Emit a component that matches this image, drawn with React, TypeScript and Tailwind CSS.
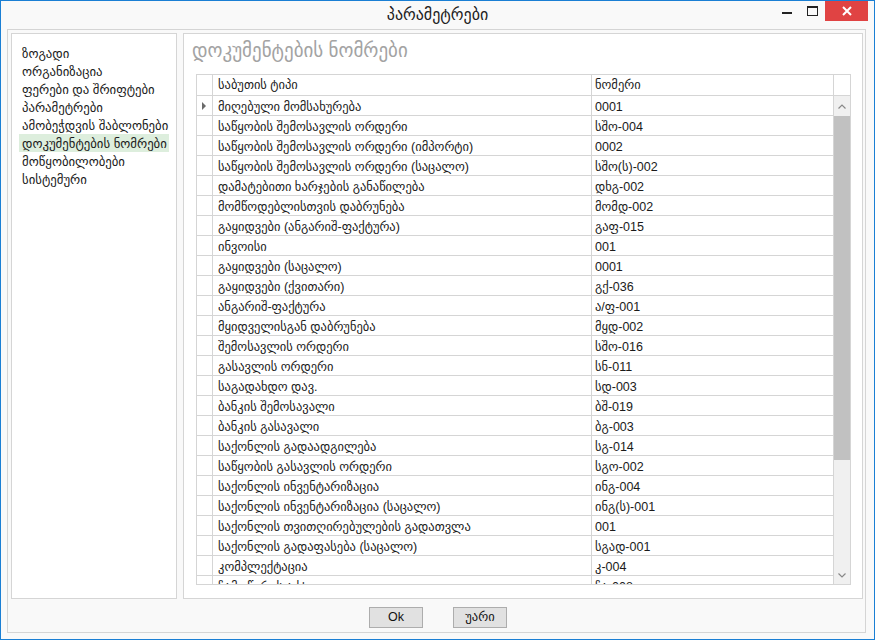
import React from "react";

const navItems = [
  "ზოგადი",
  "ორგანიზაცია",
  "ფერები და შრიფტები",
  "პარამეტრები",
  "ამობეჭდვის შაბლონები",
  "დოკუმენტების ნომრები",
  "მოწყობილობები",
  "სისტემური",
];

const rows: [string, string][] = [
  ["მიღებული მომსახურება", "0001"],
  ["საწყობის შემოსავლის ორდერი", "სშო-004"],
  ["საწყობის შემოსავლის ორდერი (იმპორტი)", "0002"],
  ["საწყობის შემოსავლის ორდერი (საცალო)", "სშო(ს)-002"],
  ["დამატებითი ხარჯების განაწილება", "დხგ-002"],
  ["მომწოდებლისთვის დაბრუნება", "მომდ-002"],
  ["გაყიდვები (ანგარიშ-ფაქტურა)", "გაფ-015"],
  ["ინვოისი", "001"],
  ["გაყიდვები (საცალო)", "0001"],
  ["გაყიდვები (ქვითარი)", "გქ-036"],
  ["ანგარიშ-ფაქტურა", "ა/ფ-001"],
  ["მყიდველისგან დაბრუნება", "მყდ-002"],
  ["შემოსავლის ორდერი", "სშო-016"],
  ["გასავლის ორდერი", "სნ-011"],
  ["საგადახდო დავ.", "სდ-003"],
  ["ბანკის შემოსავალი", "ბშ-019"],
  ["ბანკის გასავალი", "ბგ-003"],
  ["საქონლის გადაადგილება", "სგ-014"],
  ["საწყობის გასავლის ორდერი", "სგო-002"],
  ["საქონლის ინვენტარიზაცია", "ინგ-004"],
  ["საქონლის ინვენტარიზაცია (საცალო)", "ინგ(ს)-001"],
  ["საქონლის თვითღირებულების გადათვლა", "001"],
  ["საქონლის გადაფასება (საცალო)", "სგად-001"],
  ["კომპლექტაცია", "კ-004"],
  ["ჩამოწერის აქტი", "ჩა-008"],
];

const font = { fontFamily: '"Liberation Sans", "DejaVu Sans", sans-serif' };

export default function App() {
  return (
    <div
      className="w-[875px] h-[640px] border border-[#1a7fd4] bg-[#f9f9f9] flex flex-col text-[#1a1a1a] overflow-hidden"
      style={font}
    >
      {/* Title bar */}
      <div className="h-[28px] flex items-start relative">
        <div className="flex-1 text-center text-[16px] leading-[28px] text-[#222]">პარამეტრები</div>
        <div className="absolute right-[6px] top-0 flex items-start">
          <div className="w-[24px] h-[20px] flex items-center justify-center">
            <div className="w-[10px] h-[2px] bg-[#222] mt-[4px]" />
          </div>
          <div className="w-[26px] h-[20px] flex items-center justify-center">
            <div className="w-[11px] h-[10px] border border-[#222] border-t-2" />
          </div>
          <div className="w-[43px] h-[20px] bg-[#e04343] flex items-center justify-center">
            <svg width="10" height="10" viewBox="0 0 10 10">
              <path d="M1 1 L9 9 M9 1 L1 9" stroke="white" strokeWidth="2" />
            </svg>
          </div>
        </div>
      </div>

      {/* Outer box */}
      <div className="ml-[6px] w-[859px] h-[604px] border border-[#d5d5d5] flex flex-col pl-[3px] pt-[3px]">
        <div className="flex h-[566px]">
          {/* Left nav */}
          <div className="w-[166px] h-full border border-[#d5d5d5] bg-white pt-[10px] pl-[7px]">
            {navItems.map((t, i) => (
              <div
                key={t}
                className={
                  "w-[150px] h-[18px] leading-[18px] pt-[1px] px-[3px] text-[12.75px] whitespace-nowrap " +
                  (i === 5 ? "bg-[#ddeedd]" : "")
                }
              >
                {t}
              </div>
            ))}
          </div>

          {/* Right panel */}
          <div className="ml-[6px] w-[680px] h-full border border-[#d5d5d5] bg-white">
            <div className="h-[40px] pl-[8px] pt-[5px] text-[19px] leading-[24px] text-[#a3a3a3] whitespace-nowrap">
              დოკუმენტების ნომრები
            </div>
            <div className="ml-[12px] w-[655px] h-[511px] border border-[#d5d5d5] flex flex-col overflow-hidden text-[12.5px]">
              {/* header */}
              <div className="flex h-[21px] border-b border-[#d5d5d5] shrink-0">
                <div className="w-[16px] border-r border-[#d5d5d5]" />
                <div className="w-[379px] border-r border-[#d5d5d5] pl-[5px] pt-[1px] leading-[19px] whitespace-nowrap">
                  საბუთის ტიპი
                </div>
                <div className="w-[242px] border-r border-[#d5d5d5] pl-[3px] pt-[1px] leading-[19px] whitespace-nowrap">
                  ნომერი
                </div>
                <div className="flex-1" />
              </div>
              <div className="flex flex-1 min-h-0">
                <div className="w-[637px] overflow-hidden">
                  {rows.map(([a, b], i) => (
                    <div key={i} className="flex h-[20px] border-b border-[#d5d5d5]">
                      <div className="w-[16px] border-r border-[#d5d5d5] flex items-center justify-center pt-[1px]">
                        {i === 0 && (
                          <svg width="5" height="8" viewBox="0 0 5 8">
                            <path d="M0 0 L4 4 L0 8 Z" fill="#6b6b6b" />
                          </svg>
                        )}
                      </div>
                      <div className="w-[379px] border-r border-[#d5d5d5] pl-[5px] pt-[3px] leading-[16px] whitespace-nowrap overflow-hidden">
                        {a}
                      </div>
                      <div className="w-[242px] border-r border-[#d5d5d5] pl-[3px] pt-[3px] leading-[16px] whitespace-nowrap overflow-hidden">
                        {b}
                      </div>
                    </div>
                  ))}
                </div>
                {/* scrollbar */}
                <div className="flex-1 bg-[#f0f0f0] flex flex-col">
                  <div className="h-[20px] flex items-center justify-center">
                    <svg width="8" height="5" viewBox="0 0 8 5">
                      <path d="M0.5 4.5 L4 1 L7.5 4.5" stroke="#888" strokeWidth="1.2" fill="none" />
                    </svg>
                  </div>
                  <div className="h-[344px] bg-[#c1c1c1]" />
                  <div className="flex-1" />
                  <div className="h-[18px] flex items-center justify-center">
                    <svg width="8" height="5" viewBox="0 0 8 5">
                      <path d="M0.5 0.5 L4 4 L7.5 0.5" stroke="#888" strokeWidth="1.2" fill="none" />
                    </svg>
                  </div>
                </div>
              </div>
            </div>
          </div>
        </div>

        {/* Buttons */}
        <div className="flex items-start pt-[8px] pl-[358px] gap-[30px]">
          <button className="w-[54px] h-[21px] bg-[#e1e1e1] border border-[#adadad] text-[12.5px] leading-[19px] text-[#111]">
            Ok
          </button>
          <button className="w-[54px] h-[21px] bg-[#e1e1e1] border border-[#adadad] text-[12.5px] leading-[19px] text-[#111]">
            უარი
          </button>
        </div>
      </div>
    </div>
  );
}
